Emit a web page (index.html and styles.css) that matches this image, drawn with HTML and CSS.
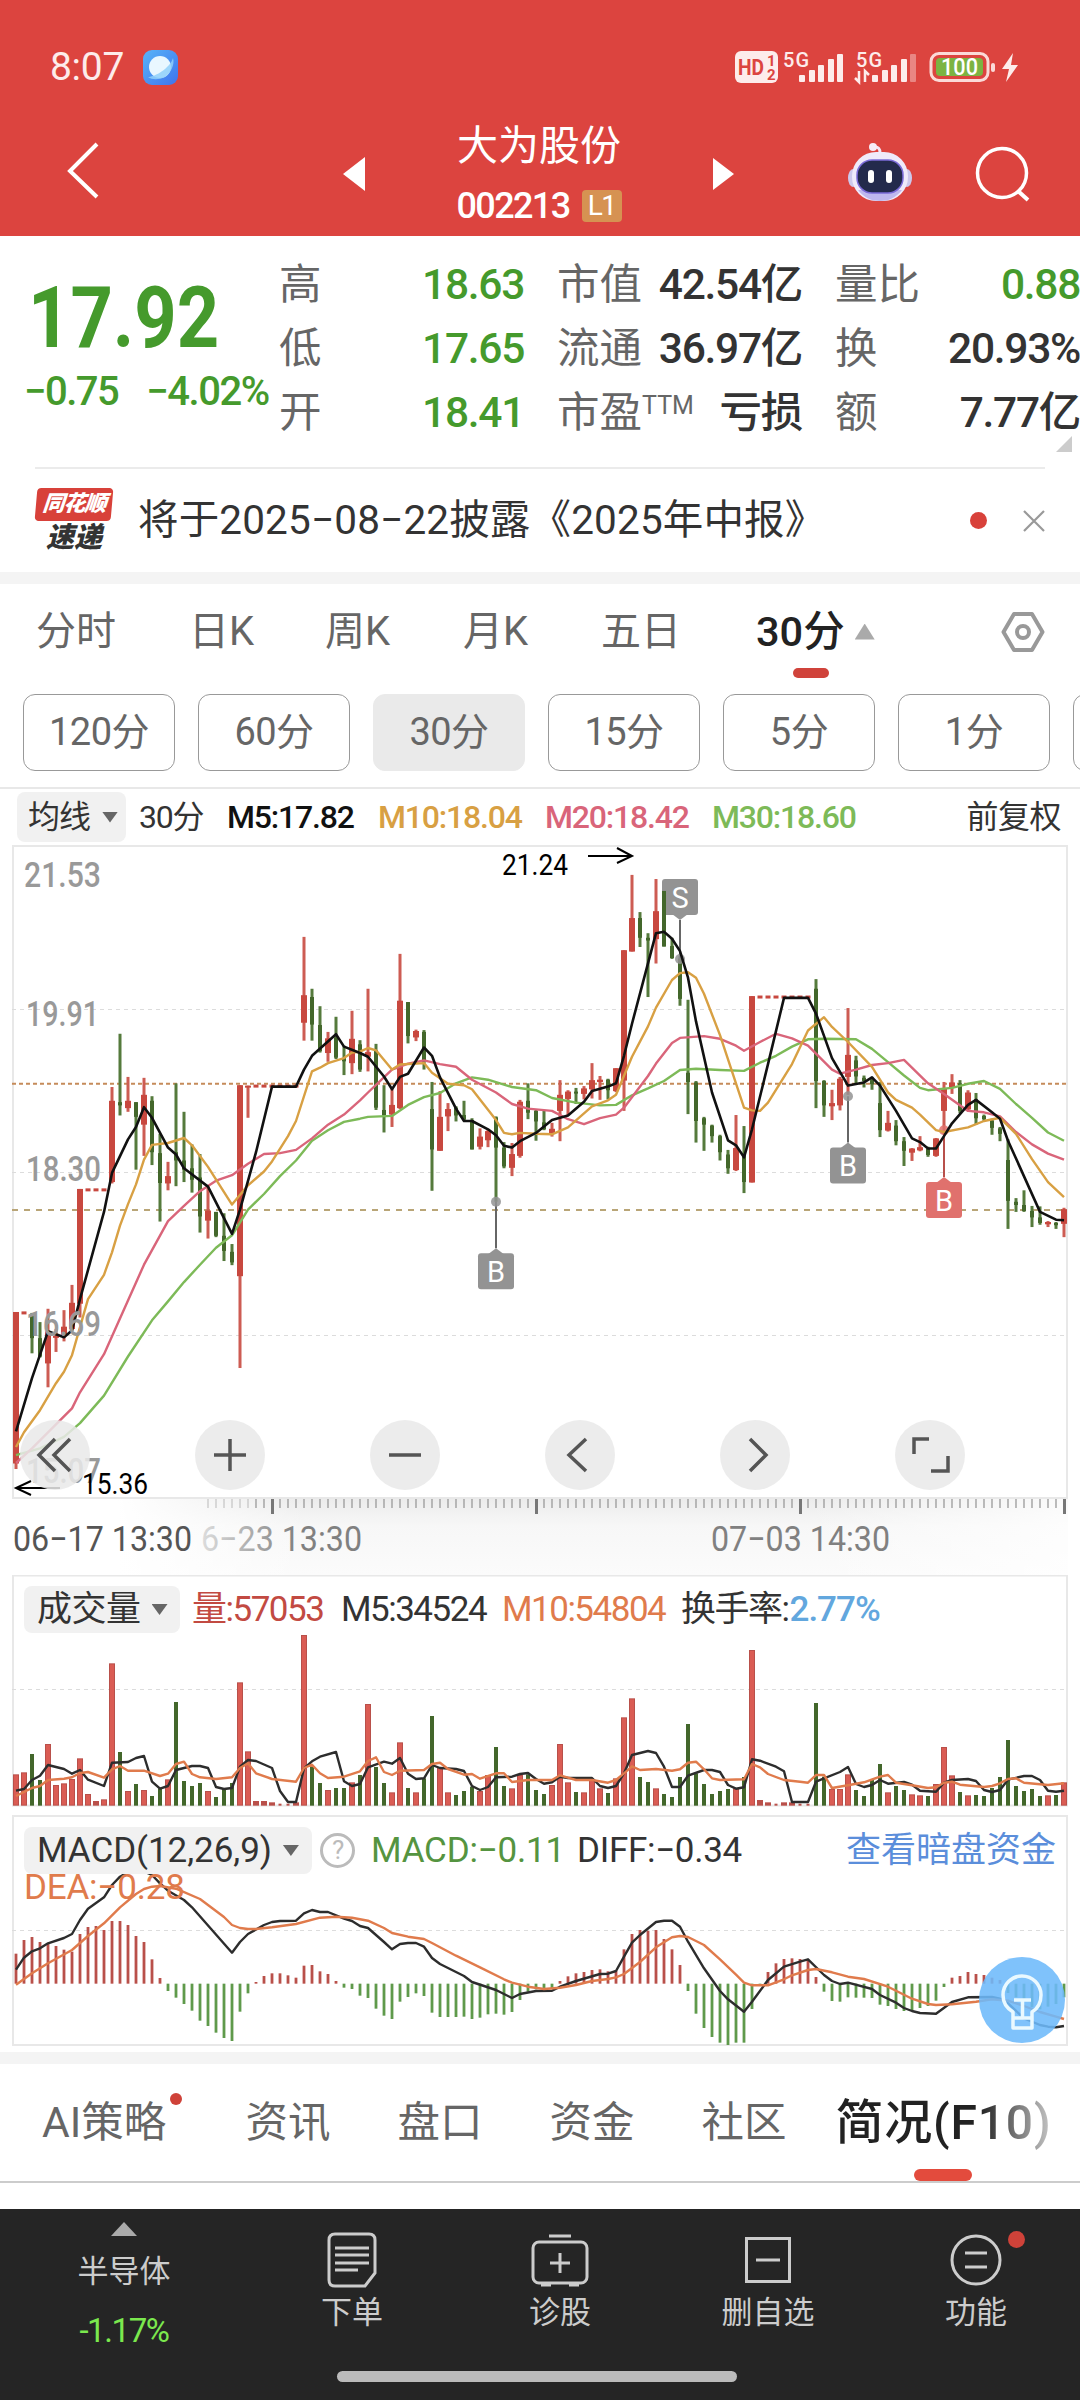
FILE: index.html
```html
<!DOCTYPE html>
<html lang="zh-CN">
  <head>
    <meta charset="UTF-8" />
    <meta name="viewport" content="width=device-width, initial-scale=1.0" />
    <title>大为股份 002213</title>
    <link rel="stylesheet" href="styles.css">
  </head>
  <body>
    <header class="header">
      <div class="status">
        <span class="time">8:07</span>
        <svg class="app-icon" width="35" height="35" viewBox="0 0 35 35">
          <defs>
            <linearGradient id="appBg" x1="0" y1="0" x2="1" y2="1">
              <stop offset="0" stop-color="#58b4f8" />
              <stop offset="1" stop-color="#3f73ee" />
            </linearGradient>
          </defs>
          <rect width="35" height="35" rx="9" fill="url(#appBg)" />
          <circle cx="17" cy="17" r="11" fill="#e9f7ff" />
          <path d="M5 27C12 27 27 18 30 8c2 6-2 15-8 19-6 3-13 3-17 0z" fill="#8fd0fa" opacity=".85" />
        </svg>
        <svg class="signals" width="290" height="42" viewBox="0 0 290 42">
          <rect x="2" y="5" width="43" height="32" rx="6" fill="#fdeceb" />
          <text x="5" y="29" class="hd" textLength="26" lengthAdjust="spacingAndGlyphs">HD</text>
          <text x="34" y="20" class="hd-num">1</text>
          <text x="34" y="34" class="hd-num">2</text>
          <text x="50" y="21" class="net" textLength="26">5G</text>
          <g fill="#fdeceb">
            <rect x="66" y="29" width="6" height="7" rx="1" />
            <rect x="76" y="24" width="6" height="12" rx="1" />
            <rect x="85" y="19" width="6" height="17" rx="1" />
            <rect x="95" y="13" width="6" height="23" rx="1" />
            <rect x="104" y="8" width="6" height="28" rx="1" />
            <rect x="139" y="29" width="6" height="7" rx="1" />
            <rect x="149" y="24" width="6" height="12" rx="1" />
            <rect x="158" y="19" width="6" height="17" rx="1" />
            <rect x="168" y="13" width="6" height="23" rx="1" />
            <rect x="177" y="8" width="6" height="28" rx="1" opacity=".4" />
          </g>
          <text x="123" y="21" class="net" textLength="26">5G</text>
          <path d="M126 25v11l-4-4M132 36V25l4 4" fill="none" stroke="#fdeceb" stroke-width="2.5" />
          <rect x="198" y="7.500" width="57" height="27" rx="8" fill="none" stroke="#fbdad8" stroke-width="3" />
          <rect x="203" y="12" width="47" height="18" rx="4" fill="#7cb342" />
          <rect x="258" y="17" width="4" height="9" rx="2" fill="#fbdad8" />
          <text x="208" y="29" class="battery" textLength="37" lengthAdjust="spacingAndGlyphs">100</text>
          <path d="M280 7l-11 16h7l-3 13 12-17h-7z" fill="#fdeceb" />
        </svg>
      </div>
      <div class="nav">
        <svg class="back" width="34" height="60" viewBox="0 0 34 60">
          <path d="M31 2L4 29l27 26" fill="none" stroke="#fff" stroke-width="4" />
        </svg>
        <div class="switcher">
          <svg width="22" height="34" viewBox="0 0 22 34"><path d="M22 0v34L0 17z" fill="#fff" /></svg>
          <div class="stock">
            <div class="stock-name">大为股份</div>
            <div class="stock-code">002213<span class="level">L1</span></div>
          </div>
          <svg width="21" height="32" viewBox="0 0 21 32"><path d="M0 0v32l21-16z" fill="#fff" /></svg>
        </div>
        <div class="nav-tools">
          <svg width="66" height="60" viewBox="0 0 66 60">
            <path d="M33 10c0-4-1-6-5-6" fill="none" stroke="#f3e6f6" stroke-width="3" />
            <circle cx="26" cy="4" r="4" fill="#f7ecf7" />
            <ellipse cx="6" cy="35" rx="5" ry="9" fill="#cdc8ec" />
            <ellipse cx="60" cy="35" rx="5" ry="9" fill="#cdc8ec" />
            <rect x="5" y="9" width="56" height="49" rx="24" fill="#efeafa" />
            <path d="M11 47c6 8 14 11 22 11s16-3 22-11" fill="#bfb8ee" />
            <rect x="10" y="17" width="46" height="33" rx="15" fill="#232a4c" stroke="#7b6bd8" stroke-width="1.500" />
            <rect x="21" y="27" width="6" height="13" rx="3" fill="#fff" />
            <rect x="39" y="27" width="6" height="13" rx="3" fill="#fff" />
          </svg>
          <svg width="58" height="58" viewBox="0 0 58 58">
            <circle cx="29" cy="29" r="24.500" fill="none" stroke="#fff" stroke-width="3.500" />
            <path d="M45 47l10 9" stroke="#fff" stroke-width="4" />
          </svg>
        </div>
      </div>
    </header>

    <section class="quote">
      <div class="price-box">
        <div class="price">17.92</div>
        <div class="change"><span>−0.75</span><span>−4.02%</span></div>
      </div>
      <div class="stats">
        <div class="stat"><label>高</label><b class="green">18.63</b></div>
        <div class="stat"><label>市值</label><b>42.54亿</b></div>
        <div class="stat"><label>量比</label><b class="green">0.88</b></div>
        <div class="stat"><label>低</label><b class="green">17.65</b></div>
        <div class="stat"><label>流通</label><b>36.97亿</b></div>
        <div class="stat"><label>换</label><b>20.93%</b></div>
        <div class="stat"><label>开</label><b class="green">18.41</b></div>
        <div class="stat"><label>市盈<sup>TTM</sup></label><b>亏损</b></div>
        <div class="stat"><label>额</label><b>7.77亿</b></div>
      </div>
      <i class="corner"></i>
    </section>

    <section class="news">
      <div class="news-logo">
        <span class="logo-top">同花顺</span>
        <span class="logo-bottom">速递</span>
      </div>
      <p class="news-text">将于2025−08−22披露《2025年中报》</p>
      <i class="news-dot"></i>
      <svg width="22" height="22" viewBox="0 0 22 22"><path d="M1 1l20 20M21 1L1 21" stroke="#999" stroke-width="2.200" /></svg>
    </section>

    <nav class="periods">
      <span>分时</span>
      <span>日K</span>
      <span>周K</span>
      <span>月K</span>
      <span>五日</span>
      <span class="active">30分<i class="up"></i></span>
      <svg class="setting" width="44" height="42" viewBox="0 0 44 42">
        <path d="M13 3h18l10.500 18L31 39H13L2.500 21z" fill="none" stroke="#999" stroke-width="4" stroke-linejoin="round" />
        <circle cx="22" cy="21" r="6" fill="none" stroke="#999" stroke-width="4" />
      </svg>
    </nav>
    <div class="minutes">
      <span>120分</span>
      <span>60分</span>
      <span class="active">30分</span>
      <span>15分</span>
      <span>5分</span>
      <span>1分</span>
      <span></span>
    </div>

    <div class="ma-row">
      <div class="chip">均线<i class="down"></i></div>
      <span class="ma-period">30分</span>
      <span class="ma-item m5">M5:17.82</span>
      <span class="ma-item m10">M10:18.04</span>
      <span class="ma-item m20">M20:18.42</span>
      <span class="ma-item m30">M30:18.60</span>
      <span class="fuquan">前复权</span>
    </div>

    <div class="kline">
      <svg id="kline" width="1080" height="731" viewBox="0 0 1080 731"></svg>
      <div class="tools">
        <button><svg width="44" height="44" viewBox="0 0 44 44"><path d="M22 6L6 22l16 16M37 6L21 22l16 16" /></svg></button>
        <button><svg width="44" height="44" viewBox="0 0 44 44"><path d="M22 6v32M6 22h32" /></svg></button>
        <button><svg width="44" height="44" viewBox="0 0 44 44"><path d="M6 22h32" /></svg></button>
        <button><svg width="44" height="44" viewBox="0 0 44 44"><path d="M28 6L11 22l17 16" /></svg></button>
        <button><svg width="44" height="44" viewBox="0 0 44 44"><path d="M17 6l16 16-16 16" /></svg></button>
        <button><svg width="44" height="44" viewBox="0 0 44 44"><path d="M6 21V6h15M40 23v15H23" /></svg></button>
      </div>
    </div>

    <div class="panel volume">
      <div class="panel-head">
        <div class="chip">成交量<i class="down"></i></div>
        <span class="vol">量:57053</span>
        <span class="vm5">M5:34524</span>
        <span class="vm10">M10:54804</span>
        <span class="rate">换手率:<em>2.77%</em></span>
      </div>
      <svg id="volume" width="1080" height="234" viewBox="0 0 1080 234"></svg>
    </div>

    <div class="panel macd">
      <div class="panel-head">
        <div class="chip">MACD(12,26,9)<i class="down"></i></div>
        <span class="help">?</span>
        <span class="macd-val">MACD:−0.11</span>
        <span class="diff-val">DIFF:−0.34</span>
        <a class="dark-fund">查看暗盘资金</a>
      </div>
      <div class="dea-val">DEA:−0.28</div>
      <svg id="macd" width="1080" height="232" viewBox="0 0 1080 232"></svg>
      <svg class="bulb" width="86" height="86" viewBox="0 0 86 86">
        <circle cx="43" cy="43" r="43" fill="#6db9fb" opacity=".88" />
        <path d="M34 60v-5c-5-3-10-9-10-17a19 19 0 0 1 38 0c0 8-4 14-9 17v5M34 55v16h19V55M34 61h19M35 43h17M43.500 43v18" fill="none" stroke="#eaf9ff" stroke-width="3.500" stroke-linejoin="round" />
      </svg>
    </div>

    <nav class="info-tabs">
      <span>AI策略<i class="dot"></i></span>
      <span>资讯</span>
      <span>盘口</span>
      <span>资金</span>
      <span>社区</span>
      <span class="active">简况(F10)</span>
    </nav>

    <footer class="footer">
      <div class="footer-row">
        <div class="index">
          <i class="up"></i>
          <span>半导体</span>
          <b>-1.17%</b>
        </div>
        <div class="item">
          <svg width="60" height="60" viewBox="0 0 60 60">
            <path d="M13 4h34q6 0 6 6v33L43 56H13q-6 0-6-6V10q0-6 6-6z" />
            <path d="M13 18h34M13 25h34M13 33h34M13 40h23" />
          </svg>
          <span>下单</span>
        </div>
        <div class="item">
          <svg width="60" height="60" viewBox="0 0 60 60">
            <rect x="3" y="12" width="54" height="41" rx="6" />
            <path d="M19 6h22M30 23v20M20 33h20M11 55h10M39 55h10" />
          </svg>
          <span>诊股</span>
        </div>
        <div class="item">
          <svg width="60" height="60" viewBox="0 0 60 60">
            <rect x="8.500" y="8.500" width="43" height="43" />
            <path d="M18 30h24" />
          </svg>
          <span>删自选</span>
        </div>
        <div class="item">
          <svg width="60" height="60" viewBox="0 0 60 60">
            <circle cx="30" cy="30" r="24" />
            <path d="M19 23h22M19 37h22" />
          </svg>
          <span>功能</span>
          <i class="dot"></i>
        </div>
      </div>
      <div class="home-bar"></div>
    </footer>
    <script src="chart.js"></script>
  </body>
</html>
```
FILE: styles.css
```css
* {
  box-sizing: border-box;
}
body {
  margin: 0;
  width: 1080px;
  height: 2400px;
  overflow: hidden;
  display: flex;
  flex-direction: column;
  background: #fff;
  color: #333;
  font-family: Roboto, "Noto Sans CJK SC", sans-serif;
  white-space: nowrap;
}
i, em, b {
  font-style: normal;
}
svg {
  display: block;
  flex: none;
}
text {
  font-family: Roboto, "Noto Sans CJK SC", sans-serif;
}
.green {
  color: #459a2c;
}
.up {
  width: 20px;
  height: 16px;
  background: #aaa;
  clip-path: polygon(50% 0, 100% 100%, 0 100%);
}
.down {
  width: 16px;
  height: 11px;
  background: #666;
  clip-path: polygon(0 0, 100% 0, 50% 100%);
}

/* 顶部 */
.header {
  height: 236px;
  background: #dc443f;
  color: #fff;
}
.status {
  height: 88px;
  padding: 46px 45px 0 50px;
  display: flex;
  align-items: center;
}
.time {
  width: 93px;
  font-size: 39px;
  letter-spacing: -0.3px;
  color: #fdeceb;
}
.signals {
  margin-left: auto;
  margin-right: 12px;
}
.hd {
  font-size: 22px;
  font-weight: 700;
  fill: #dc443f;
}
.hd-num {
  font-size: 15px;
  font-weight: 700;
  fill: #dc443f;
}
.net {
  font-size: 20px;
  font-weight: 500;
  fill: #fdeceb;
}
.battery {
  font-size: 23px;
  font-weight: 500;
  fill: #fff;
}
.nav {
  height: 148px;
  padding-top: 24px;
  display: grid;
  grid-template-columns: 343px 391px 1fr;
  align-items: center;
}
.back {
  margin: 0 0 4px 66px;
}
.switcher {
  display: flex;
  justify-content: space-between;
  align-items: center;
}
.stock {
  height: 124px;
  padding-top: 6px;
  text-align: center;
}
.stock-name {
  font-size: 41px;
  line-height: 56px;
}
.stock-code {
  display: flex;
  align-items: center;
  gap: 12px;
  height: 64px;
  font-size: 36px;
  font-weight: 500;
  letter-spacing: -1.600px;
}
.level {
  width: 40px;
  height: 32px;
  border-radius: 4px;
  background: #d69252;
  font-size: 28px;
  font-weight: 400;
  line-height: 32px;
}
.nav-tools {
  display: flex;
  justify-content: flex-end;
  align-items: center;
  gap: 60px;
  padding: 0 49px 3px 0;
}

/* 行情 */
.quote {
  position: relative;
  height: 231px;
  padding-top: 16px;
  display: flex;
}
.price-box {
  width: 280px;
  color: #459a2c;
}
.price {
  height: 130px;
  padding-left: 28px;
  font-size: 86px;
  font-weight: 700;
  line-height: 131px;
  transform: scaleX(0.86);
  transform-origin: 28px 0;
}
.change {
  display: flex;
  gap: 28px;
  padding-left: 24px;
  font-size: 40px;
  font-weight: 500;
  line-height: 20px;
  letter-spacing: -1.500px;
}
.stats {
  display: grid;
  grid-template-columns: repeat(3, 245px);
  grid-auto-rows: 64px;
  column-gap: 33px;
}
.stat {
  display: flex;
  justify-content: space-between;
  font-size: 42.500px;
  line-height: 65px;
}
.stat label {
  color: #666;
}
.stat b {
  font-weight: 500;
  letter-spacing: -1.300px;
}
.stat sup {
  font-size: 25px;
  line-height: 0;
  vertical-align: 13px;
}
.corner {
  position: absolute;
  right: 8px;
  bottom: 15px;
  width: 16px;
  height: 16px;
  background: #ccc;
  clip-path: polygon(100% 0, 100% 100%, 0 100%);
}
.news {
  height: 105px;
  margin: 0 35px;
  border-top: 2px solid #ebebeb;
  display: flex;
  align-items: center;
}
.news-logo {
  width: 78px;
  height: 66px;
  display: flex;
  flex-direction: column;
  align-items: center;
  font-weight: 900;
  font-style: italic;
}
.logo-top {
  width: 76px;
  height: 33px;
  border-radius: 4px;
  background: #d8413a;
  color: #fff;
  font-size: 22px;
  line-height: 32px;
  text-align: center;
  letter-spacing: -1px;
  transform: skewX(-5deg);
}
.logo-bottom {
  font-size: 28px;
  line-height: 33px;
}
.news-text {
  flex: 1;
  margin: 0 0 8px 25px;
  font-size: 40.500px;
  letter-spacing: 0.150px;
}
.news-dot {
  width: 17px;
  height: 17px;
  border-radius: 50%;
  background: #d8413a;
  margin-right: 36px;
}

/* 周期 */
.periods {
  height: 122px;
  border-top: 12px solid #f4f4f4;
  display: flex;
  align-items: flex-start;
  padding: 19px 0 0 36px;
  font-size: 40px;
  line-height: 57px;
  color: #666;
}
.periods span {
  width: 138px;
}
.periods span:first-child {
  width: 153px;
}
.periods span:nth-child(2) {
  width: 136px;
}
.periods span:nth-child(5) {
  width: 155px;
}
.periods .active {
  position: relative;
  width: 245px;
  display: flex;
  align-items: center;
  gap: 10px;
  color: #222;
  font-weight: 500;
  font-size: 41.500px;
}
.periods .active::after {
  content: "";
  position: absolute;
  left: 37px;
  top: 65px;
  width: 36px;
  height: 10px;
  border-radius: 5px;
  background: #d0433b;
}
.setting {
  margin-top: 8px;
}
.minutes {
  height: 95px;
  padding-left: 23px;
  display: flex;
  gap: 23px;
  overflow: hidden;
  border-bottom: 2px solid #e8e8e8;
}
.minutes span {
  flex: none;
  width: 152px;
  height: 77px;
  border: 1.500px solid #999;
  border-radius: 12px;
  font-size: 38px;
  line-height: 75px;
  letter-spacing: -0.500px;
  text-align: center;
  color: #666;
}
.minutes .active {
  background: #eaeaea;
  border-color: #eaeaea;
}

/* 均线 */
.chip {
  display: flex;
  align-items: center;
  border-radius: 8px;
  background: #f1f1f1;
  color: #333;
}
.ma-row {
  height: 55px;
  padding: 3px 19px 0 17px;
  display: flex;
  font-size: 32px;
  line-height: 50px;
  letter-spacing: -1.200px;
}
.ma-row .chip {
  width: 109px;
  height: 50px;
  padding-left: 11px;
  gap: 12px;
  letter-spacing: -1px;
}
.ma-period {
  width: 88px;
  margin-left: 13px;
}
.ma-item {
  width: 167px;
  font-weight: 500;
}
.m5 {
  width: 151px;
  color: #111;
}
.m10 {
  color: #d8a043;
}
.m20 {
  color: #d9657a;
}
.m30 {
  color: #7dba58;
}
.fuquan {
  margin-left: auto;
  letter-spacing: -0.500px;
}

/* K线 */
.kline {
  position: relative;
  height: 731px;
}
.tools {
  position: absolute;
  left: 20px;
  top: 576px;
  display: flex;
  gap: 105px;
}
.tools button {
  width: 70px;
  height: 70px;
  padding: 13px;
  border: 0;
  border-radius: 50%;
  background: rgba(233, 233, 233, 0.86);
}
.tools path {
  fill: none;
  stroke: #555;
  stroke-width: 3.500;
}
.axis-y {
  font-size: 35px;
  font-weight: 500;
  fill: #999;
}
.axis-x {
  font-size: 35px;
  fill: #808080;
}
.extreme {
  font-size: 30px;
  fill: #000;
}
.flag {
  font-size: 29px;
  fill: #fff;
  text-anchor: middle;
}

/* 成交量 MACD */
.panel {
  position: relative;
}
.panel-head {
  position: absolute;
  z-index: 1;
  left: 24px;
  top: 11px;
  width: 1032px;
  height: 47px;
  display: flex;
  align-items: center;
  font-size: 35px;
  line-height: 47px;
  letter-spacing: -1.500px;
}
.panel .chip {
  height: 47px;
  padding-left: 13px;
  gap: 11px;
}
.volume {
  height: 240px;
}
.volume .chip {
  width: 156px;
  letter-spacing: -0.500px;
  margin-right: 12px;
}
.vol {
  width: 149px;
  color: #c24a42;
}
.vm5 {
  width: 161px;
}
.vm10 {
  width: 179px;
  color: #e07b4c;
}
.rate em {
  margin-left: 1px;
  color: #62a7de;
  font-weight: 500;
  letter-spacing: -1px;
}
.macd {
  height: 237px;
}
.macd .chip {
  width: 288px;
  letter-spacing: -0.050px;
}
.macd .panel-head {
  top: 12px;
}
.help {
  width: 35px;
  height: 35px;
  margin: 0 16px 0 8px;
  border: 3px solid #bbb;
  border-radius: 50%;
  color: #bbb;
  font-size: 26px;
  line-height: 29px;
  text-align: center;
}
.macd-val {
  width: 206px;
  color: #559440;
  letter-spacing: -0.200px;
}
.diff-val {
  letter-spacing: -0.300px;
}
.dark-fund {
  margin-left: auto;
  color: #5b8edb;
  letter-spacing: 0;
}
.dea-val {
  position: absolute;
  left: 24px;
  top: 54px;
  font-size: 35px;
  letter-spacing: -0.200px;
  line-height: 38px;
  color: #e07b4c;
}
.bulb {
  position: absolute;
  left: 979px;
  top: 142px;
}

/* 资讯标签 */
.info-tabs {
  height: 131px;
  border-top: 12px solid #f4f4f4;
  border-bottom: 2px solid #ccc;
  padding-left: 42px;
  display: flex;
  font-size: 42.500px;
  line-height: 118px;
  color: #666;
}
.info-tabs span {
  position: relative;
  width: 152px;
}
.info-tabs span:first-child {
  width: 203.500px;
}
.info-tabs span:nth-child(5) {
  width: 134px;
}
.dot {
  position: absolute;
  width: 12px;
  height: 12px;
  border-radius: 50%;
  background: #cf4239;
}
.info-tabs .dot {
  left: 128px;
  top: 29px;
}
.info-tabs .active {
  width: 218px;
  font-size: 48px;
  font-weight: 500;
  letter-spacing: 0.800px;
  background: linear-gradient(to right, #222 66%, #ccc 100%);
  background-clip: text;
  -webkit-background-clip: text;
  color: transparent;
}
.info-tabs .active::after {
  content: "";
  position: absolute;
  left: 78px;
  bottom: 0;
  width: 58px;
  height: 12px;
  border-radius: 6px;
  background: #e34b3d;
}

/* 底部 */
.footer {
  margin-top: 26px;
  height: 191px;
  background: #252525;
}
.footer-row {
  height: 162px;
  display: grid;
  grid-template-columns: 248px repeat(4, 208px);
  font-size: 31px;
  color: #ccc;
}
.index {
  display: flex;
  flex-direction: column;
  align-items: center;
  padding-top: 13px;
}
.index .up {
  width: 26px;
  height: 14px;
}
.index span {
  line-height: 40px;
  margin-top: 16px;
}
.index b {
  margin-top: 20px;
  font-size: 33px;
  font-weight: 400;
  line-height: 38px;
  letter-spacing: -1.400px;
  color: #7be84e;
}
.item {
  position: relative;
  display: flex;
  flex-direction: column;
  align-items: center;
  padding-top: 21px;
}
.item svg {
  fill: none;
  stroke: #ccc;
  stroke-width: 3;
}
.item span {
  line-height: 46px;
}
.item .dot {
  left: 136px;
  top: 22px;
  width: 17px;
  height: 17px;
}
.home-bar {
  width: 400px;
  height: 11px;
  margin-left: 337px;
  border-radius: 6px;
  background: #bbb;
}
```
FILE: chart.js
```javascript
const RED = "#c8483f";
const GREEN = "#43672b";
const STEP = 8; // 每根K线间距
const LEFT = 16;

// 最高, 实体上, 实体下, 最低, 涨跌(1涨 0跌)
const candles = [
  [1028,1028,1358,1370,1],[1030,1030,1030,1030,1],[1030,1032,1085,1118,0],[1050,1085,1125,1127,0],[1021,1070,1140,1192,1],
  [1065,1080,1082,1115,1],[1024,1060,1080,1092,1],[969,1008,1065,1068,1],[760,760,1010,1040,1],[762,762,762,762,1],
  [762,762,762,762,1],[762,762,762,762,1],[538,568,745,748,1],[422,571,578,600,0],[516,568,584,592,1],
  [571,571,603,718,0],[518,555,620,688,1],[558,568,680,708,0],[640,682,747,831,0],[701,732,748,763,1],
  [530,680,698,754,0],[592,698,718,745,0],[663,715,740,768,0],[684,735,820,855,0],[757,807,829,868,1],
  [810,810,862,865,0],[813,862,895,917,0],[880,897,920,926,0],[534,534,950,1150,1],[535,535,536,605,1],
  [536,536,536,536,1],[536,536,536,536,1],[536,536,536,536,1],[536,536,536,536,1],[536,536,536,536,1],
  [536,536,536,536,1],[211,338,398,437,1],[324,342,402,437,0],[362,403,460,463,0],[418,432,464,483,1],
  [385,430,474,477,0],[448,475,482,512,0],[372,433,486,510,1],[436,445,500,505,0],[324,462,472,504,1],
  [444,458,583,588,0],[534,588,600,637,0],[543,577,598,625,1],[248,350,584,586,1],[353,353,427,443,0],
  [413,416,430,438,1],[414,418,484,500,0],[527,586,674,764,0],[547,603,677,677,1],[573,586,602,634,1],
  [580,583,600,613,0],[568,599,609,611,0],[606,610,674,674,0],[628,646,668,674,1],[630,634,654,669,1],
  [602,604,670,788,0],[658,670,711,715,0],[660,684,714,732,1],[566,570,688,692,1],[530,568,594,608,0],
  [588,590,613,655,0],[590,615,630,632,0],[616,629,640,646,1],[523,555,590,656,1],[545,548,564,600,1],
  [540,548,550,575,0],[536,541,553,565,1],[486,523,543,563,1],[514,522,527,566,1],[520,522,545,565,0],
  [497,497,547,549,1],[240,240,524,590,1],[76,170,243,243,1],[157,170,213,233,0],[203,213,219,342,0],
  [85,155,216,269,1],[111,157,230,232,0],[213,231,257,259,0],[253,258,346,361,0],[348,507,527,597,0],
  [525,528,612,659,0],[603,606,620,677,0],[620,622,645,659,0],[642,645,680,698,0],[675,685,715,727,0],
  [599,671,719,721,1],[623,684,745,769,0],[340,340,746,746,1],[342,342,342,342,1],[342,342,342,342,1],
  [342,342,342,342,1],[342,342,342,342,1],[342,342,342,342,1],[342,342,342,342,1],[342,342,342,342,1],
  [303,324,525,584,0],[523,525,578,603,0],[544,573,580,610,1],[516,520,578,589,1],[366,468,516,555,1],
  [470,480,515,531,0],[513,518,525,539,0],[516,523,532,544,0],[527,573,632,647,0],[590,616,633,635,1],
  [610,622,656,665,0],[647,656,677,710,0],[671,672,681,699,1],[645,669,676,678,1],[668,673,686,690,0],
  [649,650,688,690,1],[527,541,590,640,1],[510,528,540,553,1],[523,530,590,595,0],[545,550,587,590,1],
  [551,565,606,620,0],[598,601,608,614,0],[607,611,627,642,0],[625,628,640,656,0],[652,697,786,847,0],
  [780,788,795,810,0],[763,795,808,810,0],[797,808,822,843,0],[798,822,834,838,0],[830,832,837,843,1],
  [832,834,839,847,0],[801,804,836,865,1]
];

// 均线: 序号,位置
const ma5 = "0,1288 2,1172 4,1070 6,1083 7,1068 8,1000 11,810 12,725 14,652 15,625 16,582 17,605 19,670 20,685 21,715 24,755 27,858 28,805 30,680 32,537 35,537 36,500 37,470 40,423 41,450 43,464 44,472 46,515 47,543 48,516 49,509 51,452 52,470 53,517 55,585 56,612 57,612 59,630 60,643 61,666 62,670 63,656 65,638 67,610 69,600 71,570 72,547 74,537 75,530 76,470 77,400 80,203 81,200 82,215 83,242 84,300 85,395 87,550 89,654 90,665 91,691 92,630 94,488 96,344 99,344 100,378 102,475 104,535 106,528 107,517 108,535 110,590 112,650 113,658 114,672 115,672 116,645 117,617 119,577 120,566 122,593 123,607 124,655 128,810 130,827 131,828";
const ma10 = "0,1322 1,1290 3,1242 5,1183 6,1158 7,1122 9,1000 11,947 12,898 13,840 14,793 15,750 16,696 17,664 19,660 21,649 22,665 24,712 27,794 29,752 31,722 32,700 34,645 35,612 37,504 38,496 39,486 41,475 42,463 43,461 44,453 45,458 47,500 48,489 51,486 52,507 54,531 56,534 57,543 60,610 61,638 62,641 63,638 65,640 67,641 69,626 72,580 74,567 75,555 77,472 79,406 80,365 82,305 83,290 84,288 85,300 86,335 88,425 91,583 92,589 93,590 94,572 97,488 99,415 101,386 102,407 104,440 107,494 109,550 110,566 112,583 113,598 115,632 116,636 119,626 121,612 123,605 125,640 127,695 129,745 131,778";
const ma20 = "0,1357 2,1325 4,1290 7,1238 8,1203 11,1120 14,1003 16,925 19,830 21,797 23,765 25,742 27,730 29,705 31,684 33,682 35,675 37,650 39,620 41,598 43,567 44,550 47,500 49,487 51,480 53,488 55,494 57,522 60,550 62,575 64,585 67,590 69,608 71,619 73,606 75,598 76,583 79,514 80,487 82,442 83,431 86,427 88,433 90,448 91,459 93,440 95,422 97,432 99,448 102,500 103,509 105,500 107,490 109,486 111,479 114,530 116,553 119,590 121,593 123,602 125,636 127,663 129,683 131,696";
const ma30 = "0,1340 3,1325 6,1300 8,1270 11,1210 14,1125 17,1046 19,1005 21,963 23,925 25,888 27,861 29,805 31,771 33,732 35,698 37,655 39,632 41,614 43,607 44,603 47,601 49,577 51,560 53,551 55,530 57,517 59,522 62,538 65,545 67,562 70,572 73,578 75,577 77,556 79,541 81,525 83,501 85,498 88,501 91,503 93,485 95,470 97,450 99,434 101,433 105,434 107,455 109,484 111,513 113,540 114,545 117,540 119,531 121,525 123,542 125,575 127,605 129,637 131,655";

const volumes = [
  643,637,582,660,552,675,670,657,595,702,723,718,310,576,693,672,690,708,685,658,426,663,678,669,693,711,685,669,367,574,
  723,723,727,731,731,727,225,615,669,690,684,684,667,645,432,621,669,697,547,684,697,655,468,622,697,705,693,680,693,645,
  561,678,685,645,643,690,702,675,552,667,696,697,660,685,699,655,472,415,651,666,685,702,711,651,492,640,672,702,693,687,
  685,651,270,720,727,731,727,727,731,731,429,650,687,687,643,690,708,660,612,697,678,690,703,706,708,672,561,646,696,706,
  705,708,684,651,540,678,693,687,708,706,705,667
];
// 这几根柱子的颜色与K线不同
const flipped = [13, 14, 15, 16, 118, 119, 120];
const volumeGreen = [13, 15, 118, 120];
const vma5 = "0,692 1,687 2,660 3,647 4,615 6,627 7,641 8,630 9,659 11,678 12,608 14,606 15,594 16,588 17,665 18,686 19,678 20,630 22,618 23,618 24,624 25,681 26,687 27,684 28,620 29,600 30,603 32,624 33,693 34,726 35,726 36,625 37,604 38,590 40,576 41,664 42,678 43,672 44,622 46,605 47,611 48,594 49,641 50,657 51,655 52,615 53,624 55,627 56,633 57,678 58,690 59,681 60,652 62,650 63,642 64,639 65,657 66,671 67,667 68,650 69,654 72,654 73,678 74,684 75,678 76,640 77,585 79,573 80,579 81,620 82,681 83,681 84,647 86,630 87,630 88,636 89,675 90,686 91,682 92,598 93,602 95,620 96,634 97,726 99,726 100,665 101,655 103,636 104,621 105,672 106,681 107,675 108,660 109,671 111,666 112,674 113,692 115,695 116,668 117,660 119,657 120,663 121,690 122,696 123,690 124,659 126,648 127,648 128,660 129,692 130,695 131,692";
const vma10 = "0,708 2,684 3,678 4,660 6,656 7,652 8,639 9,636 11,653 12,628 13,618 14,632 16,632 18,648 19,641 20,612 21,605 22,642 23,652 25,657 27,652 28,624 29,610 30,640 32,657 35,665 36,624 37,614 38,640 39,654 41,650 43,634 44,603 45,592 46,636 47,645 48,632 51,630 52,612 53,608 54,627 56,644 57,642 58,656 60,640 61,640 62,666 64,660 67,660 68,646 70,660 72,660 74,668 75,660 76,640 77,619 78,630 80,627 82,632 83,628 84,608 85,605 86,628 87,655 88,660 91,658 92,612 93,622 94,642 96,660 98,665 99,668 100,645 101,645 102,684 104,676 106,667 108,650 109,645 110,668 112,676 114,684 115,682 116,668 117,665 118,674 121,681 122,678 123,670 124,657 125,655 126,668 129,675 131,670";

const macdBars = [
  431,390,381,396,402,408,419,425,372,351,348,360,333,333,345,378,396,448,504,543,563,582,602,632,648,668,684,693,605,550,
  516,498,490,490,496,503,467,465,484,492,513,533,537,557,564,596,617,627,575,561,550,558,608,621,621,621,620,627,623,613,
  611,614,606,570,545,538,535,534,513,499,490,486,480,478,484,482,418,372,360,362,360,387,418,465,543,611,654,681,698,705,
  698,698,597,525,486,460,447,445,447,450,501,545,573,575,562,563,563,564,584,588,597,603,600,594,588,572,531,503,498,486,
  492,495,503,510,549,562,570,592,598,590,582,562
];
const diff = "0,479 1,443 2,424 3,415 4,400 6,384 7,372 8,330 9,296 11,262 12,225 13,200 14,186 15,186 16,184 17,195 18,220 19,242 21,270 22,292 27,428 28,396 29,372 31,345 32,336 33,333 35,332 36,310 37,300 38,306 39,306 41,326 42,333 43,348 44,354 46,396 47,418 48,402 49,399 50,399 51,410 52,444 53,462 56,498 57,516 60,540 62,564 63,552 65,543 67,542 68,530 70,513 73,492 74,491 75,483 76,440 77,398 78,375 80,336 81,332 82,332 83,350 84,395 86,475 88,543 89,568 91,605 92,575 94,510 96,470 98,455 99,448 101,495 102,513 103,522 104,518 107,537 108,555 110,578 111,594 112,603 113,609 115,611 117,576 119,562 122,561 123,566 124,580 126,625 128,645 129,650 130,652 131,648";
const dea = "0,524 2,490 4,460 7,420 9,378 11,340 13,292 15,252 16,237 17,230 18,228 20,236 23,267 25,303 26,321 27,345 28,354 29,357 30,357 32,352 35,342 38,323 40,320 42,323 44,332 46,354 47,369 49,380 51,387 52,399 55,437 58,472 61,508 62,518 64,530 66,537 68,533 70,525 72,513 74,507 75,502 76,492 78,456 80,412 82,382 83,378 84,381 86,405 88,448 90,494 91,518 92,526 94,526 96,508 97,496 99,480 100,477 102,487 104,500 106,507 109,530 112,566 114,582 115,585 117,583 120,575 122,568 124,572 126,588 128,606 130,620 131,627";

const px = (i) => LEFT + STEP * i;

function rect(x, y, w, h, fill) {
  return `<rect x="${x}" y="${y}" width="${w}" height="${h}" fill="${fill}"/>`;
}
function dash(y, color, pattern, width = 1) {
  return `<path d="M12 ${y}H1066" stroke="${color}" stroke-width="${width}" stroke-dasharray="${pattern}"/>`;
}
function line(points, color, y, width = 2.4) {
  const list = points.split(" ").map((p) => {
    const [i, v] = p.split(",").map(Number);
    return `${px(i)},${y(v).toFixed(1)}`;
  });
  return `<polyline points="${list.join(" ")}" fill="none" stroke="${color}" stroke-width="${width}" stroke-linejoin="round"/>`;
}
function label(x, y, text, cls, length) {
  return `<text x="${x}" y="${y}" class="${cls}" textLength="${length}" lengthAdjust="spacingAndGlyphs">${text}</text>`;
}

function drawKline() {
  const y = (v) => v / 2.178 - 4;
  let s = `<defs>
    <linearGradient id="axisBg" x1="0" y1="0" x2="0" y2="1"><stop offset="0" stop-color="#ececec"/><stop offset=".35" stop-color="#f7f7f7"/><stop offset="1" stop-color="#fbfbfb"/></linearGradient>
    <linearGradient id="fade" x1="0" x2="1"><stop offset="0.1" stop-color="#fff"/><stop offset="0.28" stop-color="#fff" stop-opacity="0"/><stop offset=".75" stop-color="#fff" stop-opacity="0"/><stop offset="1" stop-color="#fff" stop-opacity=".75"/></linearGradient>
    <linearGradient id="dateFade" x1="0" x2="1"><stop offset="0" stop-color="#ddd"/><stop offset=".6" stop-color="#808080"/></linearGradient>
  </defs>`;
  s += `<rect x="12" y="655" width="1056" height="76" fill="url(#axisBg)"/><rect x="12" y="655" width="1056" height="76" fill="url(#fade)"/>`;
  s += `<rect x="13" y="2" width="1054" height="652" fill="none" stroke="#e8e8e8" stroke-width="2"/>`;
  s += [367, 722.5, 1079].map((v) => dash(Math.round(y(v)) + 0.5, "#dcdcdc", "4 4")).join("");
  s += dash(y(531), "#c58b5a", "4 3", 2) + dash(y(806), "#b9a577", "6 6", 2);

  candles.forEach(([high, top, bottom, low, up], i) => {
    const color = up ? RED : GREEN;
    const x = px(i);
    if (high === low) {
      s += rect(x - 2.5, y(top) - 1.5, 5, 3, color);
      return;
    }
    s += rect(x - 1.5, y(high), 3, y(low) - y(high), up ? "#cd5c53" : "#557a3c");
    const w = up ? 6 : 4;
    s += rect(x - w / 2, y(top), w, Math.max(2, y(bottom) - y(top)), color);
  });

  // 买卖点
  [[83, 259, 85, "S", 1], [60, 788, 900, "B", 0], [104, 558, 670, "B", 0], [116, 632, 745, "B", 2]].forEach(([i, from, box, t, type]) => {
    const x = px(i);
    const color = type === 2 ? "#e0716d" : "#939393";
    const top = y(box);
    const tip = type === 1 ? top + 41 : top - 5;
    s += `<path d="M${x} ${y(from)}V${tip}" stroke="${type === 2 ? "#b8504b" : "#666"}" stroke-width="2"/>`;
    s += `<circle cx="${x}" cy="${y(from)}" r="5" fill="${color}" opacity=".85"/>`;
    s += `<rect x="${x - 18}" y="${top}" width="36" height="36" rx="3" fill="${color}"/>`;
    s += type === 1
      ? `<path d="M${x - 8} ${top + 35}h16l-8 6z" fill="${color}"/>`
      : `<path d="M${x - 8} ${top + 1}h16l-8 -6z" fill="${color}"/>`;
    s += `<text x="${x}" y="${top + 28.5}" class="flag">${t}</text>`;
  });
  // S 标记压在K线下面
  s += rect(px(81) - 2, y(111), 4, y(232) - y(111), GREEN);

  s += line(ma30, "#7dba58", y) + line(ma20, "#d9657a", y) + line(ma10, "#d8a043", y) + line(ma5, "#111", y, 2.6);

  s += label(24, 43, "21.53", "axis-y", 77) + label(26, 182, "19.91", "axis-y", 73) + label(26, 337, "18.30", "axis-y", 75);
  s += label(26, 492, "16.69", "axis-y", 75) + label(26, 639, "15.07", "axis-y", 75);
  s += label(502, 31, "21.24", "extreme", 66) + label(82, 650, "15.36", "extreme", 66);
  s += `<path d="M588 12H632M617 4l15 8-15 7M60 644H16M31 637l-15 7 15 7" fill="none" stroke="#000" stroke-width="2"/>`;

  // 时间轴
  for (let x = 208; x < 1064; x += 8) {
    s += `<path d="M${x} 655v9" stroke="#999" stroke-width="1.3" opacity="${x < 250 ? 0.5 : 1}"/>`;
  }
  [272.5, 536.5, 800.5, 1064.5].forEach((x) => {
    s += `<path d="M${x} 655v15" stroke="#777" stroke-width="3"/>`;
  });
  s += `<text x="13" y="707" font-size="35" fill="#555" textLength="179" lengthAdjust="spacingAndGlyphs">06−17 13:30</text>`;
  s += `<text x="201" y="707" font-size="35" fill="url(#dateFade)" textLength="161" lengthAdjust="spacingAndGlyphs">6−23 13:30</text>`;
  s += label(711, 707, "07−03 14:30", "axis-x", 179);
  document.getElementById("kline").innerHTML = s;
}

function drawVolume() {
  const y = (v) => v / 3 - 15;
  let s = `<rect x="13" y="0.500" width="1054" height="230" fill="none" stroke="#e8e8e8" stroke-width="2"/>`;
  s += dash(114.5, "#dcdcdc", "4 4");
  volumes.forEach((v, i) => {
    const x = px(i);
    const h = y(737) - y(v);
    const red = flipped.includes(i) ? !volumeGreen.includes(i) : candles[i][4];
    if (red) {
      const w = v > 728 ? 3 : 6;
      s += rect(x - w / 2, y(v), w, h, "#b9504a");
      if (h > 6) s += rect(x - 2, y(v) + 1, 4, h - 2, "#da5c54");
    } else {
      s += rect(x - 2, y(v), 4, h, GREEN);
    }
  });
  s += line(vma5, "#2d2d2d", y) + line(vma10, "#e07b4c", y);
  document.getElementById("volume").innerHTML = s;
}

function drawMacd() {
  const y = (v) => v / 3 - 5;
  const zero = y(521);
  let s = `<rect x="13" y="1" width="1054" height="229" fill="none" stroke="#e8e8e8" stroke-width="2"/>`;
  s += dash(115.5, "#dcdcdc", "4 4");
  macdBars.forEach((v, i) => {
    const end = y(v);
    s += rect(px(i) - 1.4, Math.min(end, zero), 2.8, Math.abs(end - zero), v < 521 ? "#b9504a" : "#5f9a4b");
  });
  s += line(diff, "#2d2d2d", y) + line(dea, "#e07b4c", y);
  document.getElementById("macd").innerHTML = s;
}

drawKline();
drawVolume();
drawMacd();
```
